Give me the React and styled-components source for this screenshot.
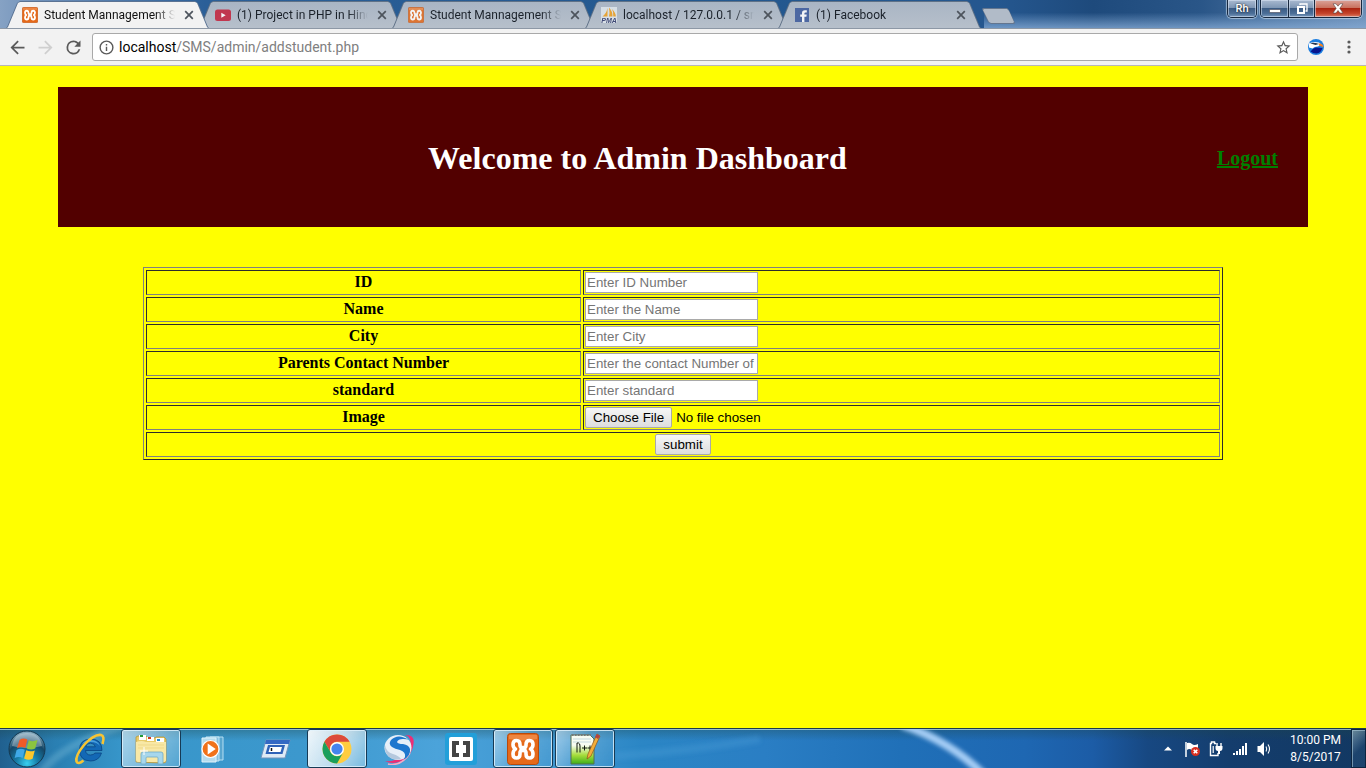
import React from "react";
import styled, { createGlobalStyle } from "styled-components";

const GlobalStyle = createGlobalStyle`
  *, *::before, *::after { box-sizing: border-box; }
  body { margin: 0; background: #ffff00; }
  button { margin: 0; padding: 0; border: 0; background: none; color: inherit; font: inherit; }
  svg { display: block; flex: none; }
`;

const uiFont = `"Segoe UI", Roboto, "Open Sans", sans-serif`;

const Screen = styled.div`
  display: flex;
  flex-direction: column;
  min-height: 100vh;
`;

/* ---------- Browser window frame ---------- */

const TitleBar = styled.header`
  display: flex;
  justify-content: space-between;
  align-items: flex-start;
  height: 29px;
  padding: 0 4px 0 5px;
  overflow: hidden;
  border-bottom: 1px solid #8d98a6;
  font-family: ${uiFont};
  background:
    linear-gradient(180deg, rgba(130, 170, 215, 0) 45%, rgba(135, 172, 214, 0.75) 100%) right / 28% 100% no-repeat,
    linear-gradient(90deg, #86a2c4 0, #6f90b9 3%, #2b5f98 15%, #23588f 50%, #25578f 73%, #1e4a7c 80%, #2a5688 88%, #6a8db5 100%);
`;

const TabStrip = styled.nav`
  display: flex;
  height: 29px;
  padding-top: 1px;
`;

const Tab = styled.div`
  position: relative;
  z-index: ${(p) => (p.$active ? 2 : 0)};
  isolation: isolate;
  display: flex;
  align-items: center;
  gap: 6px;
  width: 205px;
  height: 28px;
  padding: 0 13px 0 17px;
  color: ${(p) => (p.$active ? "#111" : "#1b222b")};
  font-size: 12px;

  & + & { margin-left: -12px; }

  &::before, &::after {
    content: "";
    position: absolute;
    z-index: -1;
    inset: 0;
    background: ${(p) => (p.$active ? "#5b7393" : "#5f7187")};
    clip-path: polygon(0 100%, 2px 26px, 12px 2px, 15px 0, 190px 0, 193px 2px, 203px 26px, 100% 100%);
  }
  &::after {
    inset: 1px 1px 0;
    background: ${(p) => (p.$active ? "#f2f2f2" : "linear-gradient(#a9b5c4, #b7c0cb)")};
    clip-path: polygon(0 100%, 2px 25px, 12px 1px, 14px 0, 189px 0, 191px 1px, 201px 25px, 100% 100%);
  }
`;

const Favicon = styled.span`
  flex: none;
  width: 16px;
  height: 16px;
  opacity: ${(p) => (p.$dim ? 0.85 : 1)};
`;

const TabTitle = styled.button`
  flex: 1;
  min-width: 0;
  overflow: hidden;
  line-height: 16px;
  text-align: left;
  white-space: nowrap;
  mask-image: linear-gradient(90deg, #000 85%, transparent 100%);
`;

const TabClose = styled.button`
  display: grid;
  place-items: center;
  width: 16px;
  height: 16px;
`;

const NewTab = styled.button`
  width: 33px;
  height: 16px;
  margin-top: 7px;
  background: #64768f;
  clip-path: polygon(0 1px, 1px 0, 25px 0, 27px 2px, 33px 15px, 32px 100%, 9px 100%, 6px 14px);

  &::before {
    content: "";
    display: block;
    height: 14px;
    margin: 0 1px;
    background: #b1bbc8;
    clip-path: polygon(0 1px, 1px 0, 24px 0, 26px 2px, 31px 13px, 30px 100%, 8px 100%, 6px 13px);
  }
`;

const WindowButtons = styled.div`
  display: flex;
  gap: 3px;
`;

const ButtonGroup = styled.div`
  display: flex;
  height: 18px;
  overflow: hidden;
  border: 1px solid #17283f;
  border-top: 0;
  border-radius: 0 0 5px 5px;
  box-shadow: 0 0 1px 1px rgba(205, 222, 240, 0.65);
`;

const WindowButton = styled.button`
  display: grid;
  place-items: center;
  width: ${(p) => p.$width}px;
  height: 17px;
  color: #fff;
  font-size: 11px;
  font-weight: 500;
  line-height: 16px;
  text-shadow: 0 0 2px #000;
  box-shadow: inset 0 0 0 1px rgba(220, 232, 245, 0.55);
  background: ${(p) =>
    p.$close
      ? "linear-gradient(#dba49a 0, #c9725f 45%, #ab2410 50%, #c5452c 80%, #dd8067 100%)"
      : "linear-gradient(#a9bad0 0, #7f97b5 45%, #3c5c84 50%, #4c6f98 80%, #7b9abd 100%)"};
  & + & { border-left: 1px solid #17283f; }
`;

const Toolbar = styled.div`
  display: flex;
  align-items: center;
  height: 37px;
  padding: 0 8px 0 3px;
  border-bottom: 1px solid #b8b6b8;
  background: #f2f2f2;
`;

const ToolButton = styled.button`
  display: grid;
  place-items: center;
  width: 28px;
  height: 28px;
  color: ${(p) => (p.$disabled ? "#cfcfcf" : "#5a5a5a")};
`;

const AddressBar = styled.div`
  display: flex;
  flex: 1;
  align-items: center;
  gap: 4px;
  height: 28px;
  margin: 0 4px 0 5px;
  padding: 0 5px;
  border: 1px solid #a9a9a9;
  border-radius: 3px;
  background: #fff;
  color: #5a5a5a;
`;

const Url = styled.a`
  flex: 1;
  color: #808080;
  font: 14px/20px ${uiFont};
  text-decoration: none;
`;

const UrlHost = styled.span`
  color: #000;
`;

/* ---------- Page ---------- */

const Page = styled.main`
  flex: 1;
  padding: 21px 8px 0;
  background: #ffff00;
  color: #000;
  font-family: "Times New Roman", "Liberation Serif", serif;
`;

const Banner = styled.div`
  display: flex;
  align-items: center;
  min-height: 140px;
  margin: 0 50px 40px;
  padding: 2px 30px 0 0;
  background: #520000;
`;

const BannerTitle = styled.h1`
  flex: 1;
  margin: 0;
  color: #fff;
  font-size: 32px;
  line-height: 36px;
  text-align: center;
`;

const LogoutLink = styled.a`
  color: #008000;
  font-size: 20px;
  font-weight: bold;
  line-height: 24px;
`;

const FormTable = styled.table`
  width: 80%;
  margin: 0 auto;
  border: 1px solid;
  border-color: #808080 #2c2c2c #2c2c2c #808080;
  border-spacing: 2px;
  font-size: 16px;
`;

const cell = `
  height: 25px;
  padding: 1px;
  border: 1px solid;
  border-color: #2c2c2c #808080 #808080 #2c2c2c;
`;

const LabelCell = styled.th`
  ${cell}
  width: ${435 / 10.72}%;
  padding: 0 1px 2px;
  line-height: 18px;
`;

const FieldCell = styled.td`
  ${cell}
`;

const TextField = styled.input`
  display: block;
  width: 173px;
  height: 21px;
  padding: 1px;
  border: 1px solid #a9a9a9;
  background: #fff;
  font-family: Arial, "Liberation Sans", sans-serif;
  &::placeholder { color: #757575; }
`;

const buttonLook = `
  height: 21px;
  padding: 0 7px;
  border: 1px solid #a9a9a9;
  border-radius: 2px;
  background: linear-gradient(#f6f6f6, #dddddd);
  color: #000;
`;

const FileField = styled.input`
  display: block;
  height: 21px;
  font-family: Arial, "Liberation Sans", sans-serif;
  &::file-selector-button {
    ${buttonLook}
    margin: 0 4px 0 0;
    font: inherit;
  }
`;

const SubmitButton = styled.input`
  ${buttonLook}
  display: block;
  margin: 0 auto;
  font-family: Arial, "Liberation Sans", sans-serif;
`;

/* ---------- Taskbar ---------- */

const Taskbar = styled.footer`
  position: relative;
  isolation: isolate;
  display: flex;
  justify-content: space-between;
  height: 40px;
  overflow: hidden;
  border-top: 1px solid #1d3a4a;
  box-shadow: inset 0 1px 0 rgba(190, 220, 220, 0.75);
  background:
    linear-gradient(180deg, rgba(30, 70, 70, 0.35), rgba(30, 70, 70, 0) 30%),
    linear-gradient(90deg, #20608f 0, #2a7fb2 4%, #3796ca 9%, #3c98cd 22%, #4ba3da 32%, #3b93ce 42%, #2b86c5 47%, #2a7ec4 56%, #2070b8 66%, #1e67b2 75%, #1c5ca6 80%, #174882 84%, #143d6d 90%, #123862 100%);
`;

const Streaks = styled.svg`
  position: absolute;
  z-index: -1;
  top: 0;
  left: 0;
`;

const TaskButtons = styled.div`
  display: flex;
  gap: 2px;
`;

const StartButton = styled.button`
  display: grid;
  place-items: center;
  width: 57px;
  height: 39px;
  padding-right: 3px;
`;

const TaskButton = styled.button`
  display: grid;
  place-items: center;
  width: 60px;
  height: 39px;
  ${(p) =>
    p.$state &&
    `
    border: 1px solid #163a55;
    border-radius: 3px;
    box-shadow: inset 0 0 0 1px rgba(225, 243, 252, 0.8);
    background: ${
      p.$state === "active"
        ? "linear-gradient(120deg, rgba(255,255,255,.92), rgba(220,236,245,.8) 55%, rgba(150,205,232,.6))"
        : p.$state === "bright"
        ? "linear-gradient(125deg, rgba(235,247,252,.65), rgba(190,222,238,.5) 55%, rgba(130,190,220,.35))"
        : "linear-gradient(125deg, rgba(225,240,250,.6), rgba(160,205,230,.3) 45%, rgba(110,175,215,.12))"
    };
  `}
`;

const Tray = styled.div`
  display: flex;
  align-items: center;
  color: #fff;
`;

const TrayButton = styled.button`
  display: grid;
  place-items: center;
  width: 24px;
  height: 24px;
`;

const Clock = styled.time`
  width: 71px;
  margin-left: 4px;
  color: #fff;
  font: 12px/17px ${uiFont};
  text-align: center;
`;

const ShowDesktop = styled.button`
  width: 15px;
  height: 39px;
  border: 1px solid #0c2440;
  box-shadow: inset 1px 1px 0 rgba(170, 200, 215, 0.6);
  background: linear-gradient(135deg, rgba(190, 215, 220, 0.5), rgba(60, 100, 140, 0.25) 55%);
`;

/* ---------- Drawings ---------- */

const Xampp = ({ size = 16 }) => (
  <svg width={size} height={size} viewBox="0 0 32 32">
    <rect x=".5" y=".5" width="31" height="31" rx="3" fill="#e5691a" stroke="#b84a0c" />
    <path d="M2 2h28v4Q16 9 2 6z" fill="#f49a5c" opacity=".6" />
    <path
      d="M13 12.500V11.500Q13 7.500 9.500 7.500T6 11.500Q6 14.500 8.500 16Q6 17.500 6 21Q6 25 9.500 25T13 21V19.500Q13 17.500 16 17.500T19 19.500V21Q19 25 22.500 25T26 21Q26 17.500 23.500 16Q26 14.500 26 11.500Q26 7.500 22.500 7.500T19 11.500V12.500Q19 14.500 16 14.500T13 12.500z"
      fill="none"
      stroke="#fff"
      strokeWidth="3.600"
      strokeLinejoin="round"
    />
    <path d="M12.500 16h7" stroke="#fff" strokeWidth="3" />
  </svg>
);

const YouTube = () => (
  <svg width="16" height="16" viewBox="0 0 16 16">
    <rect y="2.500" width="16" height="11.500" rx="2.500" fill="#c4203a" />
    <path d="M6.300 5.800v5l4.400-2.500z" fill="#fff" />
  </svg>
);

const PhpMyAdmin = () => (
  <svg width="16" height="16" viewBox="0 0 16 16">
    <rect width="16" height="16" fill="#dfe6ec" />
    <path d="M6.500 1v8.500H1.500Q5.500 6.500 6.500 1zM8 .5Q9 6 8 9.500h3.500Q11.500 4 8 .5zM11 2Q15 6 14.800 9.500H12.300Q12.700 5 11 2z" fill="#f0a01e" />
    <text x="8" y="16" textAnchor="middle" fontFamily="Liberation Sans, sans-serif" fontSize="7" fontStyle="italic" fontWeight="bold" fill="#2e3869">PMA</text>
  </svg>
);

const Facebook = () => (
  <svg width="16" height="16" viewBox="0 0 16 16">
    <rect x="1" y="1" width="14" height="14" fill="#3c5a9c" />
    <path d="M8 15V9.800H6.200V7.600H8V6Q8 3.300 10.800 3.300h2v2.200h-1.300q-1.100 0-1.100 1.100v1h2.300l-.3 2.200h-2V15z" fill="#fff" />
  </svg>
);

const Close = () => (
  <svg width="10" height="10" viewBox="0 0 10 10">
    <path d="M1.200 1.200l7.600 7.600M8.800 1.200l-7.600 7.600" stroke="#4d545d" strokeWidth="1.700" />
  </svg>
);

const MaterialIcon = ({ d, size = 21 }) => (
  <svg width={size} height={size} viewBox="0 0 24 24" fill="currentColor">
    <path d={d} />
  </svg>
);

const Eagle = () => (
  <svg width="16" height="16" viewBox="0 0 16 16">
    <circle cx="8" cy="8" r="8" fill="#1c7ee0" />
    <path d="M2.500 12.500Q5 9 8 8.500l6.500.5Q13 14 8.500 14.500 5 14.500 2.500 12.500z" fill="#06158e" />
    <path d="M.8 4.500Q5 2 11 3.500l2 2-3 2Q6 7.500 4.500 9.500L1 8.500z" fill="#fff" />
    <path d="M2 4.200q4-1.200 9 .8L7.500 6z" fill="#26364e" />
    <path d="M10.500 4.500q4.500-.5 5 4-2-1.800-4-1.500z" fill="#f58220" />
  </svg>
);

const Orb = () => (
  <svg width="38" height="38" viewBox="0 0 38 38">
    <defs>
      <radialGradient id="orb" cx=".5" cy=".9" r=".85">
        <stop offset="0" stopColor="#38d0f0" />
        <stop offset=".35" stopColor="#177da8" />
        <stop offset=".7" stopColor="#154767" />
        <stop offset="1" stopColor="#7fa5ba" />
      </radialGradient>
    </defs>
    <circle cx="19" cy="19" r="18" fill="url(#orb)" stroke="#15384f" />
    <path d="M4 16Q6 3 19 3t15 13Q19 20 4 16z" fill="#fff" opacity=".32" />
    <path d="M11.500 10Q15 7.500 19.300 9.500L17.300 18Q13.500 16 9 18.200z" fill="#ef5b28" />
    <path d="M20.800 10.200q4 2 8.700-.2l-2.300 8.600q-4 2-8.500-.1z" fill="#8bc43f" />
    <path d="M8.600 19.900q4-2 8.200-.2l-2.200 8.300q-3.500-2-8 0z" fill="#3fa9e8" />
    <path d="M18.300 20.300q4 2 8.500.1l-2.200 8.400q-4 2-8.500-.3z" fill="#fcc72b" />
  </svg>
);

const Explorer = () => (
  <svg width="32" height="32" viewBox="0 0 32 32">
    <path d="M1 29V4l2-1h8l2 2h7l1-1h8l2 2v22q0 2-3 2z" fill="#e8cb6a" stroke="#b8953a" strokeWidth=".8" />
    <path d="M4 2h7v5H4z" fill="#fff" /><path d="M5 2h3v2H5z" fill="#269b38" />
    <path d="M12 4h7v4h-7z" fill="#fff" /><path d="M13 4h3v2h-3z" fill="#d33b22" />
    <path d="M21 5h8v4h-8z" fill="#fff" /><path d="M22 6h3v2h-3z" fill="#218dd4" />
    <path d="M1 9q6-2 10 0h20v18q0 2-3 2H3q-2 0-2-2z" fill="#f8e8a6" />
    <path d="M3 12h26M3 15h26" stroke="#efd98a" />
    <path d="M6 31V21q0-2 2-2h18q2 0 2 2v10h-5v-6q0-1-1-1H12q-1 0-1 1v6z" fill="#a7d7ec" stroke="#6ea9c8" strokeWidth=".8" />
    <path d="M9 14v8M5 18h8" stroke="#fff" strokeWidth="1" />
  </svg>
);

const InternetExplorer = () => (
  <svg width="34" height="34" viewBox="0 0 34 34">
    <path d="M30 18.500H13.500q.5 4.500 5 4.500 3 0 4.500-2h6.500Q27 29 18.500 29 7.500 28.500 7.500 18T18.500 7Q30 7 30 18.500zM13.700 14.800h9.600q-.7-3.600-4.800-3.600t-4.800 3.600z" fill="#1368b5" stroke="#073f7c" strokeWidth=".7" />
    <path d="M10 12q3-4.500 9-4 7 .5 9 6-3-4-9-4-6 0-9 2z" fill="#63b7ec" opacity=".7" />
    <path d="M30.500 12Q33 4 29 3 22 2 12 13 3 24 4.500 29.500q1.500 3.500 7-1" fill="none" stroke="#f6c434" strokeWidth="2.600" />
  </svg>
);

const MediaPlayer = () => (
  <svg width="30" height="28" viewBox="0 0 30 28">
    <path d="M12 2h13v23H12z" fill="#5aa7d0" stroke="#b5def2" />
    <path d="M8 2h13v24H8z" fill="#86c0df" stroke="#c4e6f5" />
    <path d="M4 3h14v24H4z" fill="#b6dcee" stroke="#e0f3fb" />
    <circle cx="12.500" cy="14" r="8.500" fill="#f0721a" stroke="#fff" strokeWidth="1.200" />
    <path d="M9.700 8.500v11l8-5.500z" fill="#fff" />
  </svg>
);

const RunDialog = () => (
  <svg width="32" height="22" viewBox="0 0 32 22">
    <path d="M7 2h24l-5 18H2z" fill="#dfeaf5" stroke="#6f93bd" />
    <path d="M7 2h24l-1 4H6z" fill="#3469c4" />
    <path d="M9 7h17l-2.500 9H6.500z" fill="#2f62b8" />
    <path d="M11 9h12l-1.500 5H9.500z" fill="#fff" />
    <path d="M12.500 10v3" stroke="#111" strokeWidth="1.500" />
  </svg>
);

const Chrome = () => (
  <svg width="30" height="30" viewBox="0 0 30 30">
    <circle cx="15" cy="15" r="14.500" fill="#ffcd40" />
    <path d="M2.400 7.800A14.500 14.500 0 0 1 27.600 7.800H15A7.200 7.200 0 0 0 8.800 18.600z" fill="#dc4a3b" />
    <path d="M2.400 7.800A14.500 14.500 0 0 0 15 29.500L21.200 18.600A7.200 7.200 0 0 1 8.800 18.600z" fill="#1a9f5c" />
    <circle cx="15" cy="15" r="7" fill="#fff" />
    <circle cx="15" cy="15" r="5.600" fill="#4585ee" />
  </svg>
);

const Swirl = () => (
  <svg width="32" height="32" viewBox="0 0 32 32">
    <path d="M22 2q10-1 8.500 9-1 9-8.500 15Q11 33 2 28q9 1 16-4 9-7 9.500-15Q27 3 22 2z" fill="#ee2d75" />
    <path d="M5 31Q18 34 27 20" fill="none" stroke="#f7a9c3" strokeWidth="1.500" />
    <ellipse cx="15" cy="14.500" rx="13.500" ry="12.500" fill="#e6eff8" />
    <path d="M26 7Q15 0 8 7q-3 4 1 7 3 2 8 3 6 2 5 7-1 2-2 3 8-4 7-11-1-4-7-5-5 0-6-2 1-3 6-3 4 0 6 1z" fill="#1e77ce" />
    <path d="M2 12q1 7 8 9 6 2 8 5-8 2-13-3-4-5-3-11z" fill="#b4c8dd" />
  </svg>
);

const Brackets = () => (
  <svg width="32" height="32" viewBox="0 0 32 32">
    <rect width="32" height="32" rx="3" fill="#229fd9" />
    <rect x="4" y="4" width="24" height="24" rx="2" fill="#fff" />
    <path d="M14 8H7v16h7v-4h-3v-8h3zM18 8h7v16h-7v-4h3v-8h-3z" fill="#444" />
  </svg>
);

const Notepad = () => (
  <svg width="32" height="32" viewBox="0 0 32 32">
    <defs>
      <linearGradient id="note" x2="0" y2="1">
        <stop offset=".35" stopColor="#f8fcf2" />
        <stop offset=".7" stopColor="#a5dc3a" />
        <stop offset="1" stopColor="#3cae1a" />
      </linearGradient>
    </defs>
    <path d="M2 2h19l4 4v25H2z" fill="url(#note)" stroke="#526f52" />
    <path d="M3 2h19" stroke="#777" strokeWidth="2" strokeDasharray="1.500 1.500" />
    <path d="M4 6h18M4 9h18" stroke="#c6d9df" />
    <path d="M8 19.500V10h1.500q1.500.5 1.500 3v6.500M13 15h5M15.500 12.500v5M18.500 15h5M21 12.500v5" fill="none" stroke="#10180e" strokeWidth="1" />
    <path d="M28 1l3 2-9 20-4 3 1-5z" fill="#f2ad3a" stroke="#8c551d" strokeWidth=".7" />
    <path d="M28 1l3 2-2 3-3-2z" fill="#b44343" />
  </svg>
);

const FlagIcon = () => (
  <svg width="17" height="16" viewBox="0 0 17 16">
    <path d="M2 1v15" stroke="#fff" strokeWidth="1.500" />
    <path d="M3 2q3-1 5 1t6 0v7q-3 1-6-1T3 9z" fill="#fff" />
    <circle cx="11.500" cy="10.500" r="4.500" fill="#d82f20" />
    <path d="M9.700 8.700l3.600 3.600M13.300 8.700l-3.600 3.600" stroke="#fff" strokeWidth="1.600" />
  </svg>
);

const PowerIcon = () => (
  <svg width="14" height="16" viewBox="0 0 14 16">
    <path d="M7 2.500H5.500V1h-3v1.500h-1v12h7.500V12" fill="none" stroke="#fff" strokeWidth="1.400" />
    <path d="M3.500 5H5v7H3.500z" fill="#fff" opacity=".8" />
    <path d="M8 2v4M12 2v4" stroke="#fff" strokeWidth="1.400" />
    <path d="M6.500 5h7v2q0 3-2.500 3v3H9v-3q-2.500 0-2.500-3z" fill="#fff" />
  </svg>
);

const SignalIcon = () => (
  <svg width="16" height="14" viewBox="0 0 16 14">
    <path d="M1 11h2v2H1zM4 9h2v4H4zM7 7h2v6H7zM10 4h2v9h-2zM13 1h2v12h-2z" fill="#fff" />
  </svg>
);

const SpeakerIcon = () => (
  <svg width="16" height="16" viewBox="0 0 16 16">
    <path d="M1.500 5H4l4-4v14l-4-4H1.500z" fill="#fff" />
    <path d="M10 5.500q1.500 2.500 0 5M12 3.500q3 4.500 0 9" fill="none" stroke="#fff" strokeWidth="1.100" />
  </svg>
);

const tabs = [
  { title: "Student Mannagement System", icon: <Xampp />, active: true },
  { title: "(1) Project in PHP in Hindi", icon: <YouTube /> },
  { title: "Student Mannagement System", icon: <Xampp /> },
  { title: "localhost / 127.0.0.1 / sms", icon: <PhpMyAdmin /> },
  { title: "(1) Facebook", icon: <Facebook /> },
];

const fields = [
  { id: "id", label: "ID", placeholder: "Enter ID Number" },
  { id: "name", label: "Name", placeholder: "Enter the Name" },
  { id: "city", label: "City", placeholder: "Enter City" },
  { id: "contact", label: "Parents Contact Number", placeholder: "Enter the contact Number of Parents" },
  { id: "standard", label: "standard", placeholder: "Enter standard" },
];

const apps = [
  { name: "Internet Explorer", icon: <InternetExplorer /> },
  { name: "Windows Explorer", icon: <Explorer />, state: "bright" },
  { name: "Media Player", icon: <MediaPlayer /> },
  { name: "Run", icon: <RunDialog /> },
  { name: "Chrome", icon: <Chrome />, state: "active" },
  { name: "Browser", icon: <Swirl /> },
  { name: "Brackets", icon: <Brackets /> },
  { name: "XAMPP", icon: <Xampp size={32} />, state: "open" },
  { name: "Notepad++", icon: <Notepad />, state: "open" },
];

export default function App() {
  return (
    <Screen>
      <GlobalStyle />
      <TitleBar>
        <TabStrip aria-label="Tabs">
          {tabs.map((tab, i) => (
            <Tab key={i} $active={tab.active}>
              <Favicon $dim={!tab.active}>{tab.icon}</Favicon>
              <TabTitle type="button">{tab.title}</TabTitle>
              <TabClose type="button" aria-label="Close tab"><Close /></TabClose>
            </Tab>
          ))}
          <NewTab type="button" aria-label="New tab" />
        </TabStrip>
        <WindowButtons>
          <ButtonGroup>
            <WindowButton type="button" $width={28}>Rh</WindowButton>
          </ButtonGroup>
          <ButtonGroup>
            <WindowButton type="button" $width={27} aria-label="Minimize">
              <svg width="12" height="12" viewBox="0 0 12 12"><path d="M.5 6.500h11v3H.5z" fill="#fff" stroke="#445" strokeWidth=".6" /></svg>
            </WindowButton>
            <WindowButton type="button" $width={26} aria-label="Restore">
              <svg width="12" height="12" viewBox="0 0 12 12"><path d="M4 2V1h7v7h-1.500" fill="none" stroke="#fff" strokeWidth="1.300" /><path d="M2 4h6v6H2z" fill="none" stroke="#fff" strokeWidth="2" /></svg>
            </WindowButton>
            <WindowButton type="button" $width={47} $close aria-label="Close">
              <svg width="12" height="11" viewBox="0 0 12 11"><path d="M1 .8h3l2 2.400L8 .8h3L7.800 5.300 11 10H8L6 7.500 4 10H1l3.200-4.700z" fill="#fff" stroke="#544" strokeWidth=".6" /></svg>
            </WindowButton>
          </ButtonGroup>
        </WindowButtons>
      </TitleBar>

      <Toolbar>
        <ToolButton type="button" aria-label="Back">
          <MaterialIcon d="M20 11H7.830l5.590-5.590L12 4l-8 8 8 8 1.410-1.410L7.830 13H20v-2z" />
        </ToolButton>
        <ToolButton type="button" aria-label="Forward" $disabled>
          <MaterialIcon d="M12 4l-1.410 1.410L16.170 11H4v2h12.170l-5.580 5.590L12 20l8-8z" />
        </ToolButton>
        <ToolButton type="button" aria-label="Reload">
          <MaterialIcon d="M17.650 6.350A7.960 7.960 0 0 0 12 4a8 8 0 1 0 7.730 10h-2.080A6 6 0 1 1 12 6c1.660 0 3.140.69 4.220 1.780L13 11h7V4l-2.350 2.350z" />
        </ToolButton>
        <AddressBar>
          <MaterialIcon size={17} d="M11 17h2v-6h-2v6zm1-15a10 10 0 1 0 0 20 10 10 0 0 0 0-20zm0 18a8 8 0 1 1 0-16 8 8 0 0 1 0 16zM11 9h2V7h-2v2z" />
          <Url href="#address"><UrlHost>localhost</UrlHost>/SMS/admin/addstudent.php</Url>
          <MaterialIcon size={17} d="M22 9.240l-7.190-.62L12 2 9.190 8.630 2 9.240l5.460 4.730L5.820 21 12 17.270 18.180 21l-1.630-7.030L22 9.240zM12 15.400l-3.760 2.270 1-4.280-3.320-2.880 4.380-.38L12 6.100l1.710 4.040 4.380.38-3.320 2.880 1 4.280L12 15.400z" />
        </AddressBar>
        <ToolButton type="button" aria-label="Extension"><Eagle /></ToolButton>
        <ToolButton type="button" aria-label="Menu">
          <svg width="16" height="16" viewBox="0 0 16 16" fill="currentColor">
            <circle cx="13" cy="3" r="1.600" /><circle cx="13" cy="8" r="1.600" /><circle cx="13" cy="13" r="1.600" />
          </svg>
        </ToolButton>
      </Toolbar>

      <Page>
        <Banner>
          <BannerTitle>Welcome to Admin Dashboard</BannerTitle>
          <LogoutLink href="#logout">Logout</LogoutLink>
        </Banner>
        <form onSubmit={(e) => e.preventDefault()}>
          <FormTable>
            <tbody>
              {fields.map((f) => (
                <tr key={f.id}>
                  <LabelCell scope="row"><label htmlFor={f.id}>{f.label}</label></LabelCell>
                  <FieldCell><TextField id={f.id} type="text" placeholder={f.placeholder} /></FieldCell>
                </tr>
              ))}
              <tr>
                <LabelCell scope="row"><label htmlFor="image">Image</label></LabelCell>
                <FieldCell><FileField id="image" type="file" /></FieldCell>
              </tr>
              <tr>
                <FieldCell colSpan={2}><SubmitButton type="submit" value="submit" /></FieldCell>
              </tr>
            </tbody>
          </FormTable>
        </form>
      </Page>

      <Taskbar>
        <Streaks width="1366" height="39" viewBox="0 0 1366 39" aria-hidden="true">
          <defs><filter id="soft" x="-20%" y="-50%" width="140%" height="200%"><feGaussianBlur stdDeviation="2" /></filter></defs>
          <g filter="url(#soft)" fill="none">
            <path d="M902-4Q950 12 984 46" stroke="#a5cdf5" strokeWidth="8" />
            <path d="M40 45Q60 15 130-5" stroke="#75b8d8" strokeWidth="8" opacity=".4" />
            <path d="M615 27Q690 22 760 10" stroke="#55a9df" strokeWidth="8" opacity=".25" />
          </g>
        </Streaks>
        <TaskButtons>
          <StartButton type="button" aria-label="Start"><Orb /></StartButton>
          {apps.map((app) => (
            <TaskButton key={app.name} type="button" aria-label={app.name} $state={app.state}>{app.icon}</TaskButton>
          ))}
        </TaskButtons>
        <Tray>
          <TrayButton type="button" aria-label="Show hidden icons">
            <svg width="8" height="5" viewBox="0 0 8 5"><path d="M0 4.500L4 .5l4 4z" fill="#fff" /></svg>
          </TrayButton>
          <TrayButton type="button" aria-label="Action center"><FlagIcon /></TrayButton>
          <TrayButton type="button" aria-label="Power"><PowerIcon /></TrayButton>
          <TrayButton type="button" aria-label="Network"><SignalIcon /></TrayButton>
          <TrayButton type="button" aria-label="Volume"><SpeakerIcon /></TrayButton>
          <Clock>10:00 PM<br />8/5/2017</Clock>
          <ShowDesktop type="button" aria-label="Show desktop" />
        </Tray>
      </Taskbar>
    </Screen>
  );
}
